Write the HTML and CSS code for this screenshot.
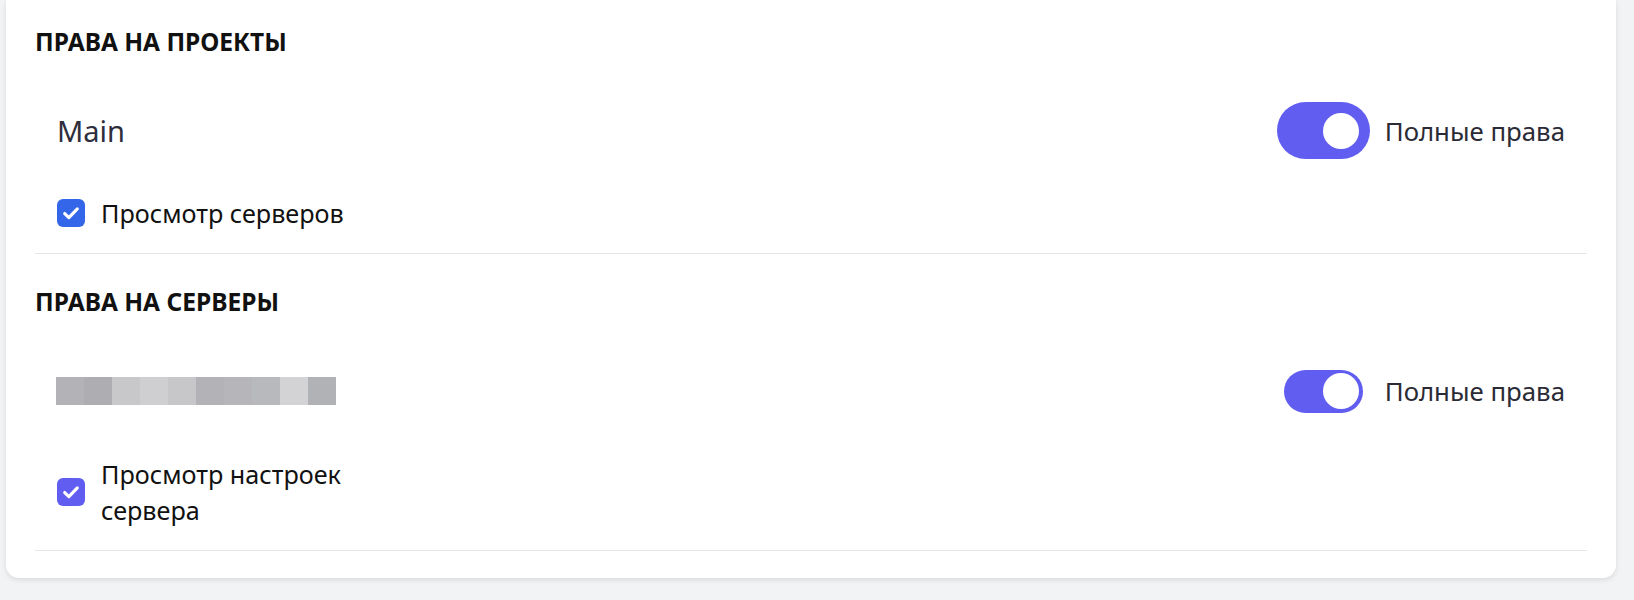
FILE: index.html
```html
<!DOCTYPE html>
<html lang="ru">
<head>
<meta charset="utf-8">
<title>Права</title>
<link rel="stylesheet" href="styles.css">
</head>
<body>
<div class="card">
  <section class="section">
    <h2 class="heading">ПРАВА НА ПРОЕКТЫ</h2>
    <div class="item">
      <div class="row">
        <span class="name">Main</span>
        <label class="full">
          <span class="toggle toggle-focus"><span class="knob"></span></span>
          <span class="full-text">Полные права</span>
        </label>
      </div>
      <div class="checks">
        <label class="check">
          <span class="box box-blue"><svg viewBox="0 0 16 16" width="28" height="28"><path d="M4.4 8.3l2.4 2.3 4.8-4.9" fill="none" stroke="#fff" stroke-width="1.8" stroke-linecap="round" stroke-linejoin="round"/></svg></span>
          <span class="check-text">Просмотр серверов</span>
        </label>
      </div>
    </div>
  </section>
  <section class="section">
    <h2 class="heading">ПРАВА НА СЕРВЕРЫ</h2>
    <div class="item">
      <div class="row">
        <span class="blur">
          <i style="background:#b3b2b7"></i><i style="background:#aeadb2"></i><i style="background:#c8c8ca"></i><i style="background:#cfcfd1"></i><i style="background:#c7c7c9"></i><i style="background:#b3b2b7"></i><i style="background:#b6b6ba"></i><i style="background:#b8b9bd"></i><i style="background:#d3d3d5"></i><i style="background:#b1b2b5"></i>
        </span>
        <label class="full">
          <span class="toggle"><span class="knob"></span></span>
          <span class="full-text">Полные права</span>
        </label>
      </div>
      <div class="checks">
        <label class="check">
          <span class="box box-purple"><svg viewBox="0 0 16 16" width="28" height="28"><path d="M4.4 8.3l2.4 2.3 4.8-4.9" fill="none" stroke="#fff" stroke-width="1.8" stroke-linecap="round" stroke-linejoin="round"/></svg></span>
          <span class="check-text">Просмотр настроек сервера</span>
        </label>
      </div>
    </div>
  </section>
</div>
</body>
</html>
```
FILE: styles.css
```css
* { box-sizing: border-box; }
html, body { margin: 0; padding: 0; }
body {
  background: #f2f3f5;
  font-family: "Noto Sans", "Open Sans", sans-serif;
  font-size: 24.5px;
  line-height: 36px;
  color: #111;
  height: 600px;
  overflow: hidden;
}
.card {
  margin-left: 6px;
  width: 1610px;
  background: #fff;
  border-radius: 0 0 13px 13px;
  box-shadow: 0 2px 5px rgba(0, 0, 0, 0.1);
  padding: 23.5px 29px 27.5px;
}
.section + .section { margin-top: 30px; }
.heading {
  margin: 0;
  font-size: 24.5px;
  font-weight: 700;
  line-height: 36px;
  color: #111;
}
.item {
  padding: 42px 22px 22px;
  border-bottom: 1px solid #e6e6e9;
}
.row {
  height: 58px;
  display: flex;
  align-items: center;
  justify-content: space-between;
}
.name {
  font-size: 29px;
  color: #2e2e3c;
}
.blur {
  display: flex;
  height: 28px;
  margin-left: -1px;
}
.blur i { width: 28px; height: 28px; display: block; }
.full {
  display: flex;
  align-items: center;
  gap: 22px;
}
.full-text { color: #2b2b36; font-size: 25.8px; }
.toggle {
  width: 79px;
  height: 43px;
  border-radius: 22px;
  background: #615df1;
  display: flex;
  align-items: center;
  justify-content: flex-end;
  padding-right: 4px;
}
.toggle-focus { box-shadow: 0 0 0 7px #615df1; }
.knob {
  width: 36px;
  height: 36px;
  border-radius: 50%;
  background: #fff;
}
.checks { margin-top: 35.5px; }
.check {
  display: flex;
  align-items: center;
  gap: 16px;
}
.box {
  width: 28px;
  height: 28px;
  border-radius: 6px;
  flex: none;
  display: flex;
  align-items: center;
  justify-content: center;
}
.box svg { display: block; }
.box-blue { background: #3366e8; }
.box-purple { background: #615df1; }
.check-text { max-width: 300px; color: #111; font-size: 25.2px; }
```
